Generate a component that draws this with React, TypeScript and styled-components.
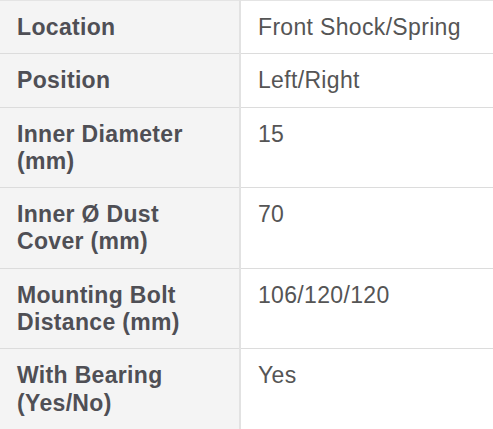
import React from "react";
import styled, { createGlobalStyle } from "styled-components";

const Global = createGlobalStyle`
  html, body { margin: 0; padding: 0; background: #fff; overflow: hidden; }
  body { width: 493px; height: 429px; }
`;

const Frame = styled.div`
  width: 493px;
  height: 429px;
  overflow: hidden;
`;

const Table = styled.table`
  border-collapse: collapse;
  width: 520px;
  table-layout: fixed;
  font-family: "Liberation Sans", Arial, sans-serif;
  font-size: 23px;
  letter-spacing: 0.33px;
  line-height: 27.3px;
  color: #555;
`;

const Row = styled.tr`
  border-top: 1px solid #e4e4e4;
  border-bottom: 1px solid #dcdcdc;
`;

const Label = styled.th`
  width: 240px;
  box-sizing: border-box;
  background: #f4f4f4;
  color: #4f4f55;
  font-weight: bold;
  text-align: left;
  vertical-align: top;
  padding: 13px 17px 12px 17px;
  border-right: 2px solid #e2e2e2;
`;

const Value = styled.td`
  text-align: left;
  vertical-align: top;
  padding: 13px 17px 12px 17px;
`;

const rows: [string, string][] = [
  ["Location", "Front Shock/Spring"],
  ["Position", "Left/Right"],
  ["Inner Diameter (mm)", "15"],
  ["Inner Ø Dust Cover (mm)", "70"],
  ["Mounting Bolt Distance (mm)", "106/120/120"],
  ["With Bearing (Yes/No)", "Yes"],
];

export default function App() {
  return (
    <>
      <Global />
      <Frame>
        <Table>
          <tbody>
            {rows.map(([k, v]) => (
              <Row key={k}>
                <Label>{k}</Label>
                <Value>{v}</Value>
              </Row>
            ))}
          </tbody>
        </Table>
      </Frame>
    </>
  );
}
